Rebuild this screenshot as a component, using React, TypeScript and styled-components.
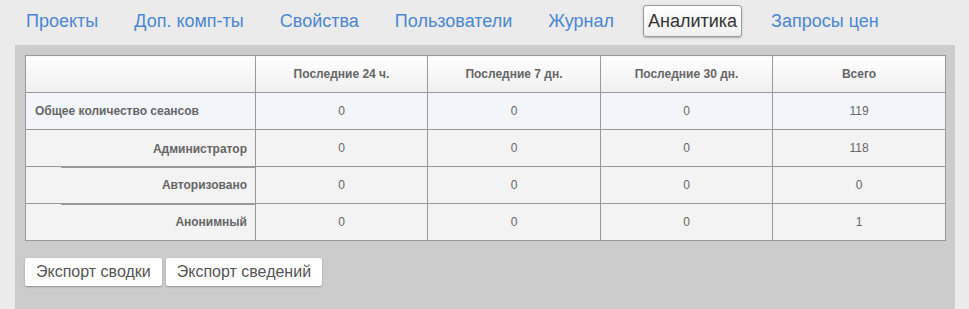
import React from "react";
import styled, { createGlobalStyle } from "styled-components";

const tabs = [
  "Проекты",
  "Доп. комп-ты",
  "Свойства",
  "Пользователи",
  "Журнал",
  "Аналитика",
  "Запросы цен",
];

const columns = ["Последние 24 ч.", "Последние 7 дн.", "Последние 30 дн.", "Всего"];

const subRows = [
  { label: "Администратор", values: ["0", "0", "0", "118"] },
  { label: "Авторизовано", values: ["0", "0", "0", "0"] },
  { label: "Анонимный", values: ["0", "0", "0", "1"] },
];

const App = () => {
  return (
    <>
      <GlobalStyle />
      <Nav>
        {tabs.map((tab) => (
          <Tab key={tab} $active={tab === "Аналитика"}>
            {tab}
          </Tab>
        ))}
      </Nav>
      <Panel>
        <StatsTable>
          <colgroup>
            <col style={{ width: 230 }} />
            <col style={{ width: 172 }} />
            <col style={{ width: 173 }} />
            <col style={{ width: 172 }} />
            <col style={{ width: 173 }} />
          </colgroup>
          <thead>
            <tr>
              <HeadCell />
              {columns.map((c) => (
                <HeadCell key={c}>{c}</HeadCell>
              ))}
            </tr>
          </thead>
          <tbody>
            <TotalRow>
              <LabelCell>Общее количество сеансов</LabelCell>
              <ValueCell>0</ValueCell>
              <ValueCell>0</ValueCell>
              <ValueCell>0</ValueCell>
              <ValueCell>119</ValueCell>
            </TotalRow>
            {subRows.map((row, i) => (
              <SubRow key={row.label}>
                <SubLabelCell $first={i === 0}>
                  <SubLabel $divided={i > 0}>{row.label}</SubLabel>
                </SubLabelCell>
                {row.values.map((v, j) => (
                  <ValueCell key={j}>{v}</ValueCell>
                ))}
              </SubRow>
            ))}
          </tbody>
        </StatsTable>
        <Actions>
          <ActionButton>Экспорт сводки</ActionButton>
          <ActionButton>Экспорт сведений</ActionButton>
        </Actions>
      </Panel>
    </>
  );
};

const GlobalStyle = createGlobalStyle`
  html, body {
    margin: 0;
    padding: 0;
    background: #ebebeb;
    font-family: "Liberation Sans", Arial, sans-serif;
    height: 100%;
  }
  #root {
    height: 100%;
  }
`;

const Nav = styled.nav`
  display: flex;
  align-items: center;
  gap: 22px;
  padding: 5px 0 8px 19px;
  height: 32px;
`;

const Tab = styled.a<{ $active?: boolean }>`
  box-sizing: border-box;
  height: 32px;
  padding: 0 ${(p) => (p.$active ? "4px" : "6px")};
  display: flex;
  align-items: center;
  font-size: 18px;
  color: ${(p) => (p.$active ? "#333" : "#4a87d4")};
  border: 1px solid ${(p) => (p.$active ? "#9a9a9a" : "transparent")};
  border-radius: 3px;
  background: ${(p) =>
    p.$active ? "linear-gradient(#ffffff, #f0f0f0)" : "transparent"};
  box-shadow: ${(p) => (p.$active ? "0 1px 2px rgba(0,0,0,0.25)" : "none")};
  cursor: pointer;
`;

const Panel = styled.section`
  margin-left: 15px;
  width: 940px;
  box-sizing: border-box;
  padding: 10px;
  background: #cccccc;
  min-height: 264px;
`;

const StatsTable = styled.table`
  width: 920px;
  border-collapse: collapse;
  table-layout: fixed;
  font-size: 12px;
  color: #666;
`;

const HeadCell = styled.th`
  height: 36px;
  border: 1px solid #999;
  background: linear-gradient(#ffffff, #efefef);
  font-weight: bold;
  text-align: center;
  padding: 0;
`;

const TotalRow = styled.tr`
  background: #f2f6fb;
`;

const SubRow = styled.tr`
  background: #f3f3f3;
`;

const LabelCell = styled.td`
  height: 36px;
  border: 1px solid #999;
  font-weight: bold;
  padding: 0 0 0 9px;
`;

const ValueCell = styled.td`
  height: 36px;
  border: 1px solid #999;
  text-align: center;
  padding: 0;
`;

const SubLabelCell = styled.td<{ $first?: boolean }>`
  height: 36px;
  padding: 0;
  border-left: 1px solid #999;
  border-right: 1px solid #999;
  border-bottom: 1px solid #999;
  border-top: ${(p) => (p.$first ? "1px solid #999" : "none")};
`;

const SubLabel = styled.div<{ $divided?: boolean }>`
  margin-left: 35px;
  height: 36px;
  box-sizing: border-box;
  border-top: 1px solid ${(p) => (p.$divided ? "#999" : "transparent")};
  margin-top: ${(p) => (p.$divided ? "-1px" : "0")};
  display: flex;
  align-items: center;
  justify-content: flex-end;
  padding-right: 8px;
  font-weight: bold;
`;

const Actions = styled.div`
  display: flex;
  gap: 4px;
  margin-top: 17px;
`;

const ActionButton = styled.button`
  height: 28px;
  padding: 0 11px;
  border: none;
  border-radius: 2px;
  background: #fff;
  color: #555;
  font-family: "Liberation Sans", Arial, sans-serif;
  font-size: 16px;
  box-shadow: 0 1px 2px rgba(0, 0, 0, 0.3);
  cursor: pointer;
`;

export default App;
